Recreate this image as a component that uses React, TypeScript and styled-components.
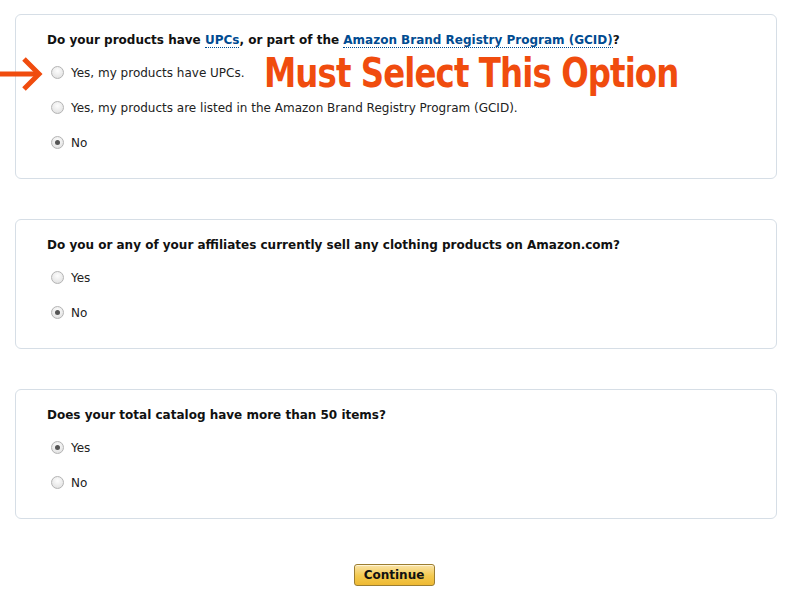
import React from "react";
import styled, { createGlobalStyle } from "styled-components";

const GlobalStyle = createGlobalStyle`
  body {
    margin: 0;
    background: #ffffff;
    font-family: "DejaVu Sans", Verdana, sans-serif;
    color: #111;
  }
`;

const Page = styled.div`
  position: relative;
  width: 762px;
  padding: 14px 0 0 15px;
  display: flex;
  flex-direction: column;
  gap: 40px;
`;

const Card = styled.div`
  border: 1px solid #d6dee6;
  border-radius: 6px;
  padding: 15px 31px 18px;
`;

const Question = styled.div`
  font-size: 12px;
  font-weight: bold;
  line-height: 20px;
  margin-bottom: 5px;
`;

const QLink = styled.a`
  color: #004b91;
  text-decoration: none;
  border-bottom: 1px dotted #004b91;
`;

const Option = styled.label`
  display: flex;
  align-items: center;
  height: 35px;
  font-size: 12px;
  color: #222;
  gap: 7px;
  padding-left: 4px;
`;

const Radio = styled.span<{ checked?: boolean }>`
  width: 11px;
  height: 11px;
  border-radius: 50%;
  border: 1px solid #b4b4b4;
  background: radial-gradient(circle at 50% 35%, #fdfdfd 0%, #e6e6e6 70%, #d4d4d4 100%);
  display: flex;
  align-items: center;
  justify-content: center;

  &::after {
    content: "";
    width: 5px;
    height: 5px;
    border-radius: 50%;
    background: ${({ checked }) => (checked ? "#555" : "transparent")};
  }
`;

const Footer = styled.div`
  display: flex;
  justify-content: center;
  margin-top: 5px;
  padding-right: 4px;
`;

const ContinueButton = styled.button`
  width: 81px;
  height: 22px;
  border: 1px solid #9c7e31;
  border-radius: 3px;
  background: linear-gradient(#f9e3a8, #f3c94e 55%, #eeb933);
  font-family: "DejaVu Sans", Verdana, sans-serif;
  font-size: 12px;
  font-weight: bold;
  color: #111;
  padding: 0;
  box-shadow: inset 0 1px 0 #fff5d6;
`;

const Annotation = styled.div`
  position: absolute;
  left: 264px;
  top: 48px;
  font-family: "DejaVu Sans Condensed", "DejaVu Sans", sans-serif;
  font-stretch: condensed;
  font-weight: bold;
  font-size: 40px;
  line-height: 50px;
  letter-spacing: -1px;
  color: #f04c0e;
  white-space: nowrap;
  transform: scaleX(0.9);
  transform-origin: left center;
`;

const Arrow = styled.svg`
  position: absolute;
  left: 0;
  top: 56px;
`;

type Opt = { label: string; checked?: boolean };

const QuestionCard = ({ title, options }: { title: React.ReactNode; options: Opt[] }) => (
  <Card>
    <Question>{title}</Question>
    {options.map((o) => (
      <Option key={o.label}>
        <Radio checked={o.checked} />
        {o.label}
      </Option>
    ))}
  </Card>
);

export default function App() {
  return (
    <>
      <GlobalStyle />
      <Page>
        <QuestionCard
          title={
            <>
              Do your products have <QLink>UPCs</QLink>, or part of the{" "}
              <QLink>Amazon Brand Registry Program (GCID)</QLink>?
            </>
          }
          options={[
            { label: "Yes, my products have UPCs." },
            { label: "Yes, my products are listed in the Amazon Brand Registry Program (GCID)." },
            { label: "No", checked: true },
          ]}
        />
        <QuestionCard
          title="Do you or any of your affiliates currently sell any clothing products on Amazon.com?"
          options={[{ label: "Yes" }, { label: "No", checked: true }]}
        />
        <QuestionCard
          title="Does your total catalog have more than 50 items?"
          options={[{ label: "Yes", checked: true }, { label: "No" }]}
        />
        <Footer>
          <ContinueButton>Continue</ContinueButton>
        </Footer>
        <Annotation>Must Select This Option</Annotation>
        <Arrow width="43" height="36" viewBox="0 0 43 36">
          <path d="M0 18 H38" stroke="#f04c0e" strokeWidth="5" fill="none" />
          <path d="M24 3 L39 18 L24 33" stroke="#f04c0e" strokeWidth="5" fill="none" />
        </Arrow>
      </Page>
    </>
  );
}
